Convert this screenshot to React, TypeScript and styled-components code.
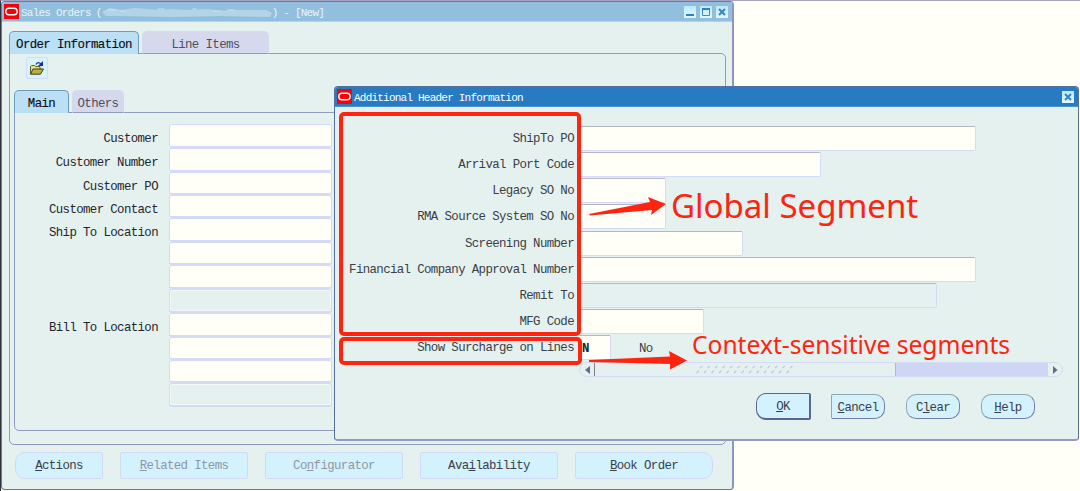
import { createGlobalStyle, styled } from "styled-components";

const headerFields = [
  { label: "Customer", height: 24 },
  { label: "Customer Number", height: 24 },
  { label: "Customer PO", height: 23 },
  { label: "Customer Contact", height: 23 },
  { label: "Ship To Location", height: 24 },
  { label: "", height: 23 },
  { label: "", height: 24 },
  { label: "", height: 24, disabled: true },
  { label: "Bill To Location", height: 24 },
  { label: "", height: 23 },
  { label: "", height: 23 },
  { label: "", height: 24, disabled: true },
];

const segments = [
  { label: "ShipTo PO", width: 396, height: 26 },
  { label: "Arrival Port Code", width: 241, height: 26 },
  { label: "Legacy SO No", width: 86, height: 26 },
  { label: "RMA Source System SO No", width: 86, height: 27 },
  { label: "Screening Number", width: 163, height: 26 },
  { label: "Financial Company Approval Number", width: 396, height: 26 },
  { label: "Remit To", width: 357, height: 26, disabled: true },
  { label: "MFG Code", width: 124, height: 26 },
  { label: "Show Surcharge on Lines", width: 31, height: 26, value: "N", text: "No" },
];

const grip = Array.from({ length: 13 }, (_, i) => i);

function OracleLogo() {
  return (
    <Logo width="15" height="15" viewBox="0 0 15 15">
      <rect width="15" height="15" fill="#f80008" />
      <rect x="1.8" y="4.2" width="11.4" height="6.6" rx="3.2" fill="none" stroke="#fff" strokeWidth="1.4" />
    </Logo>
  );
}

function CloseIcon() {
  return (
    <svg width="12" height="12" viewBox="0 0 12 12">
      <path d="M3 3l6 6M9 3l-6 6" stroke="#3584c4" strokeWidth="2" />
    </svg>
  );
}

function App() {
  return (
    <>
      <GlobalStyle />
      <Desktop>
        <MainWindow>
          <TitleBar>
            <OracleLogo />
            <Title>Sales Orders</Title>
            <Paren>(</Paren>
            <svg width="170" height="13" viewBox="0 0 171 13">
              <path
                d="M0 7L8 3L20 5L33 3L58 5L70 4L84 5L107 4L118 6L130 5L165 5L171 8L169 12L120 11L72 12L16 11L4 11Z"
                fill="#b2d3e8"
              />
              <path d="M5 5h9M18 6h6M56 4h7M91 4h4M111 6h9M126 5h8" stroke="#c8e2f1" />
            </svg>
            <Title>) - [New]</Title>
            <Controls>
              <Control>
                <svg width="12" height="12" viewBox="0 0 12 12">
                  <path d="M2 9h8" stroke="#2f80c2" strokeWidth="2" />
                </svg>
              </Control>
              <Control>
                <svg width="12" height="12" viewBox="0 0 12 12">
                  <path d="M2.5 3v6.5h7V3" fill="none" stroke="#3d8aca" />
                  <path d="M2 3h8" stroke="#2f80c2" strokeWidth="2" />
                </svg>
              </Control>
              <Control>
                <CloseIcon />
              </Control>
            </Controls>
          </TitleBar>
          <WindowBody>
            <Tabs>
              <Tab $active $width={130}>Order Information</Tab>
              <Tab $width={127}>Line Items</Tab>
            </Tabs>
            <OuterPanel>
              <ToolButton>
                <svg width="16" height="16" viewBox="0 0 16 16">
                  <path d="M1.5 14V6.5l1-1h3l1 1H11V9" fill="#e8e37a" stroke="#5b5a22" />
                  <path d="M1.5 14.2L4 9h10.5l-3 5.2z" fill="#b8b13f" stroke="#3f3f1b" />
                  <path d="M7 4.5C8 2 10 2 12 4" fill="none" stroke="#1c2fc0" strokeWidth="1.3" />
                  <path d="M14 1v5H9z" fill="#1726c4" />
                </svg>
              </ToolButton>
              <InnerTabs>
                <Tab $active $width={55}>Main</Tab>
                <Tab $width={52}>Others</Tab>
              </InnerTabs>
              <InnerPanel>
                {headerFields.map((field, index) => (
                  <HeaderRow key={index} $height={field.height}>
                    <HeaderLabel>{field.label}</HeaderLabel>
                    <HeaderInput $disabled={field.disabled} />
                  </HeaderRow>
                ))}
              </InnerPanel>
            </OuterPanel>
            <Actions>
              <ActionButton $width={88} $round="left">
                <u>A</u>ctions
              </ActionButton>
              <ActionButton $width={128} $disabled>
                <u>R</u>elated Items
              </ActionButton>
              <ActionButton $width={138} $disabled>
                Co<u>n</u>figurator
              </ActionButton>
              <ActionButton $width={138}>
                Ava<u>i</u>lability
              </ActionButton>
              <ActionButton $width={138} $round="right">
                <u>B</u>ook Order
              </ActionButton>
            </Actions>
          </WindowBody>
        </MainWindow>

        <Dialog>
          <TitleBar $active>
            <OracleLogo />
            <Title>Additional Header Information</Title>
            <Controls>
              <Control>
                <CloseIcon />
              </Control>
            </Controls>
          </TitleBar>
          <Segments>
            {segments.map((segment) => (
              <SegmentRow key={segment.label} $height={segment.height}>
                <SegmentLabel>{segment.label}</SegmentLabel>
                <SegmentInput $width={segment.width} $disabled={segment.disabled}>
                  {segment.value}
                </SegmentInput>
                {segment.text && <SegmentText>{segment.text}</SegmentText>}
              </SegmentRow>
            ))}
          </Segments>
          <Scrollbar>
            <ScrollArrow>
              <svg width="5" height="8" viewBox="0 0 5 8">
                <path d="M5 0v8L0 4z" fill="#66698c" />
              </svg>
            </ScrollArrow>
            <Thumb>
              <svg width="98" height="9" viewBox="0 0 98 9">
                {grip.map((i) => (
                  <path
                    key={i}
                    d={`M${i * 7.5 + 4} 3.2l2.4-2.4M${i * 7.5 + 0.5} 8l2.4-2.4`}
                    stroke="#bcc4e2"
                    strokeWidth="1.2"
                  />
                ))}
              </svg>
            </Thumb>
            <Track />
            <ScrollArrow>
              <svg width="5" height="8" viewBox="0 0 5 8">
                <path d="M0 0v8L4.5 4z" fill="#66698c" />
              </svg>
            </ScrollArrow>
          </Scrollbar>
          <DialogButtons>
            <OkButton>
              <u>O</u>K
            </OkButton>
            <DialogButton $radius="2px 10px 10px 2px">
              <u>C</u>ancel
            </DialogButton>
            <DialogButton>
              C<u>l</u>ear
            </DialogButton>
            <DialogButton>
              <u>H</u>elp
            </DialogButton>
          </DialogButtons>
        </Dialog>

        {/* callouts drawn over the form */}
        <GlobalFrame />
        <ContextFrame />
        <Arrows width="110" height="180" viewBox="585 190 110 180">
          <path d="M589 214L650 202L648 197L666 204L651 215L652 210L590 215.5Z" fill="#ff2410" />
          <path d="M589 360L670 356.5L669 351L687 360.5L670 369.5L670 364L589 362Z" fill="#ff2410" />
        </Arrows>
        <GlobalNote>Global Segment</GlobalNote>
        <ContextNote>Context-sensitive segments</ContextNote>
      </Desktop>
    </>
  );
}

export default App;

const GlobalStyle = createGlobalStyle`
  * {
    box-sizing: border-box;
  }
  body {
    margin: 0;
    background: #fffff7;
    font-family: "Liberation Mono", monospace;
    font-size: 12.4px;
    letter-spacing: -0.62px;
    line-height: 14px;
    color: #3a3e48;
    white-space: nowrap;
  }
  svg {
    display: block;
    flex-shrink: 0;
  }
  u {
    text-underline-offset: 1px;
  }
`;

const Desktop = styled.div`
  position: relative;
  width: 1080px;
  height: 491px;
  overflow: hidden;
  border-top: 1px solid #a3a3c2;
  border-left: 1px solid #34323c;
`;

const MainWindow = styled.section`
  position: absolute;
  left: 0;
  top: 0;
  width: 733px;
  height: 489px;
  display: flex;
  flex-direction: column;
  overflow: hidden;
  background: #e5f1ef;
  border: 1px solid #6b789f;
  border-right: 2px solid #8d98b8;
  border-radius: 4px;
`;

const Dialog = styled.section`
  position: absolute;
  left: 333px;
  top: 85px;
  width: 745px;
  height: 355px;
  display: flex;
  flex-direction: column;
  overflow: hidden;
  background: #e5f1ef;
  border: 1px solid #56709d;
  border-bottom: 2px solid #8f9cbc;
  border-radius: 4px;
`;

const TitleBar = styled.header<{ $active?: boolean }>`
  height: 20px;
  flex-shrink: 0;
  display: flex;
  align-items: center;
  padding: 0 4px 0 2px;
  background: ${(props) => (props.$active ? "#267bc3" : "#93bfde")};
  border-bottom: 1px solid ${(props) => (props.$active ? "#4b94cf" : "#b3d3e8")};
  color: ${(props) => (props.$active ? "#fff" : "#e6f4fa")};
`;

const Logo = styled.svg`
  margin-right: 2px;
`;

const Title = styled.span`
  font-size: 11px;
  letter-spacing: -0.78px;
  padding-top: 3px;
  white-space: pre;
`;

const Paren = styled(Title)`
  margin-left: 5px;
`;

const Controls = styled.div`
  margin-left: auto;
  display: flex;
  gap: 4px;
`;

const Control = styled.div`
  width: 12px;
  height: 12px;
  background: linear-gradient(#bde8fa, #e2f8ff);
`;

const WindowBody = styled.div`
  flex: 1;
  display: flex;
  flex-direction: column;
  padding: 9px 6px 0 7px;
`;

const Tabs = styled.div`
  display: flex;
  gap: 3px;
  position: relative;
  margin-bottom: -1px;
`;

const InnerTabs = styled(Tabs)`
  margin-top: 11px;
`;

const Tab = styled.div<{ $active?: boolean; $width: number }>`
  width: ${(props) => props.$width}px;
  height: 23px;
  padding-top: 6px;
  text-align: center;
  border: 1px solid ${(props) => (props.$active ? "#6d9db8" : "#d6d8ee")};
  border-bottom: ${(props) => (props.$active ? "none" : "1px solid #8f9cc0")};
  border-radius: 5px 5px 0 0;
  background: ${(props) => (props.$active ? "#bbe0f5" : "#d6d8ee")};
  color: ${(props) => (props.$active ? "#0c0f14" : "#4c505a")};
  -webkit-text-stroke: ${(props) => (props.$active ? "0.15px #0c0f14" : "0")};
`;

const OuterPanel = styled.div`
  height: 392px;
  flex-shrink: 0;
  padding: 3px 7px 0 4px;
  border: 1px solid #8f9cc0;
  border-radius: 0 5px 5px 5px;
`;

const ToolButton = styled.div`
  display: flex;
  align-items: center;
  justify-content: center;
  width: 22px;
  height: 22px;
  margin-left: 12px;
  background: #d9f3fb;
  border: 1px solid #d3dbfa;
  border-radius: 2px;
`;

const InnerPanel = styled.div`
  height: 319px;
  padding-top: 11px;
  border: 1px solid #8f9cc0;
  border-radius: 0 5px 5px 5px;
`;

const HeaderRow = styled.div<{ $height: number }>`
  height: ${(props) => props.$height}px;
  display: flex;
`;

const HeaderLabel = styled.span`
  width: 143px;
  padding-top: 8px;
  margin-right: 11px;
  text-align: right;
  color: #23262e;
`;

const HeaderInput = styled.div<{ $disabled?: boolean }>`
  width: 163px;
  background: ${(props) => (props.$disabled ? "#e5f1ef" : "#fffff7")};
  border: 1px solid #d5dbf6;
  border-bottom-width: 2px;
  border-radius: 3px;
  box-shadow: ${(props) => (props.$disabled ? "inset 0 0 0 1px #f3f9fb" : "none")};
`;

const Actions = styled.div`
  display: flex;
  align-items: center;
  gap: 17px;
  margin-top: 7px;
  padding-left: 6px;
`;

const corners = {
  left: "10px 2px 2px 10px",
  right: "2px 10px 10px 2px",
};

const ActionButton = styled.div<{ $width: number; $round?: "left" | "right"; $disabled?: boolean }>`
  width: ${(props) => props.$width}px;
  height: 27px;
  display: flex;
  align-items: center;
  justify-content: center;
  padding-top: 1px;
  white-space: pre;
  background: #d4f2fe;
  border: 1px solid #d2d9f7;
  border-radius: ${(props) => (props.$round ? corners[props.$round] : "2px")};
  color: ${(props) => (props.$disabled ? "#8d98a1" : "#3a3e48")};
`;

const Segments = styled.div`
  padding-top: 19px;
`;

const SegmentRow = styled.div<{ $height: number }>`
  display: flex;
  height: ${(props) => props.$height}px;
`;

const SegmentLabel = styled.span`
  width: 239px;
  margin-right: 6px;
  padding-top: 6px;
  text-align: right;
`;

const SegmentInput = styled.div<{ $width: number; $disabled?: boolean }>`
  width: ${(props) => props.$width}px;
  height: 25px;
  padding: 6px 0 0 2px;
  font-weight: bold;
  color: #20232b;
  background: ${(props) => (props.$disabled ? "#e5f1ef" : "#fffff7")};
  border: 1px solid #d6daf4;
  border-left: none;
  border-top-color: #b5b7c9;
  border-radius: 0 2px 2px 0;
`;

const SegmentText = styled.span`
  padding: 7px 0 0 28px;
`;

const Scrollbar = styled.div`
  width: 484px;
  height: 15px;
  margin: 1px 0 0 244px;
  flex-shrink: 0;
  display: flex;
  border: 1px solid #d5daf5;
  border-radius: 8px;
  overflow: hidden;
`;

const ScrollArrow = styled.div`
  width: 14px;
  display: flex;
  align-items: center;
  justify-content: center;
`;

const Thumb = styled.div`
  width: 302px;
  display: flex;
  align-items: center;
  justify-content: center;
  border-left: 1px solid #7f8187;
  border-right: 1px solid #b1b7d7;
`;

const Track = styled.div`
  flex: 1;
  background: #cdd7f5;
`;

const DialogButtons = styled.div`
  display: flex;
  align-items: center;
  gap: 21px;
  margin: 16px 0 0 421px;
`;

const DialogButton = styled.div<{ $radius?: string }>`
  width: 54px;
  height: 25px;
  display: flex;
  align-items: center;
  justify-content: center;
  padding-top: 2px;
  background: #d4f2fe;
  border: 1px solid #91a6b4;
  border-right-color: #707fa9;
  border-bottom-color: #707fa9;
  border-radius: ${(props) => props.$radius || "10px"};
`;

const OkButton = styled(DialogButton)`
  width: 55px;
  height: 27px;
  margin-right: -1px;
  border: 1px solid #57678f;
  border-right-width: 2px;
  border-bottom-width: 2px;
  border-radius: 10px 2px 2px 10px;
`;

const GlobalFrame = styled.div`
  position: absolute;
  left: 338px;
  top: 111px;
  width: 242px;
  height: 224px;
  border: 4px solid #ff2410;
  border-radius: 5px;
`;

const ContextFrame = styled(GlobalFrame)`
  top: 336px;
  width: 243px;
  height: 28px;
`;

const Arrows = styled.svg`
  position: absolute;
  left: 584px;
  top: 189px;
`;

const GlobalNote = styled.div`
  position: absolute;
  left: 670px;
  top: 183px;
  font-family: "Noto Sans", sans-serif;
  font-size: 33px;
  line-height: 44px;
  letter-spacing: 0;
  color: #ff2410;
`;

const ContextNote = styled(GlobalNote)`
  left: 691px;
  top: 327px;
  font-size: 24.6px;
  line-height: 34px;
`;
